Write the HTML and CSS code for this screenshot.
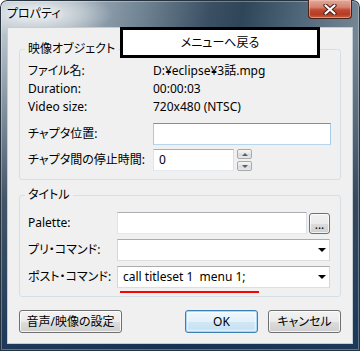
FILE: index.html
```html
<!DOCTYPE html>
<html lang="ja">
<head>
<meta charset="utf-8">
<title>プロパティ</title>
<link rel="stylesheet" href="styles.css">
</head>
<body>
<div class="window">
  <div class="titlebar">
    <span class="caption">プロパティ</span>
    <div class="close-btn">
      <svg width="14" height="11" viewBox="0 0 14 11"><path d="M2.5 1.5 L11.5 9.5 M11.5 1.5 L2.5 9.5" stroke="#4a1f16" stroke-width="4.2" stroke-linecap="round"/><path d="M2.5 1.5 L11.5 9.5 M11.5 1.5 L2.5 9.5" stroke="#fff" stroke-width="2.2" stroke-linecap="round"/></svg>
    </div>
  </div>
  <div class="client">
    <fieldset class="group group-video">
      <legend>映像オブジェクト</legend>
      <div class="info-row"><span class="label">ファイル名:</span><span class="value">D:¥eclipse¥3話.mpg</span></div>
      <div class="info-row"><span class="label">Duration:</span><span class="value">00:00:03</span></div>
      <div class="info-row"><span class="label">Video size:</span><span class="value">720x480 (NTSC)</span></div>
      <div class="field-row first-field"><span class="label">チャプタ位置:</span><div class="textbox textbox-focus chapter-box"></div></div>
      <div class="field-row second-field"><span class="label">チャプタ間の停止時間:</span><div class="textbox pause-box">0</div>
        <div class="spin"><div class="spin-btn"><span class="arrow-up"></span></div><div class="spin-btn"><span class="arrow-down"></span></div></div>
      </div>
    </fieldset>
    <fieldset class="group group-title">
      <legend>タイトル</legend>
      <div class="field-row"><span class="label label-narrow">Palette:</span><div class="textbox palette-box"></div><div class="btn small-btn">...</div></div>
      <div class="field-row spaced"><span class="label label-narrow">プリ・コマンド:</span><div class="combo"><span class="combo-arrow"></span></div></div>
      <div class="field-row spaced"><span class="label label-narrow">ポスト・コマンド:</span><div class="combo"><span class="combo-text">call titleset 1  menu 1;</span><span class="combo-arrow"></span><span class="underline"></span></div></div>
    </fieldset>
    <div class="button-row">
      <div class="btn av-btn">音声/映像の設定</div>
      <div class="btn default-btn ok-btn">OK</div>
      <div class="btn cancel-btn">キャンセル</div>
    </div>
  </div>
  <div class="overlay-note">メニューへ戻る</div>
</div>
</body>
</html>
```
FILE: styles.css
```css
* { box-sizing: border-box; }
html, body { margin: 0; padding: 0; }
body {
  width: 360px;
  height: 351px;
  overflow: hidden;
  font-family: "Noto Sans", "Noto Sans CJK JP", sans-serif;
  font-size: 12px;
  line-height: 16px;
  color: #000;
  font-feature-settings: "palt";
  background: #fff;
}
.window {
  position: relative;
  width: 360px;
  height: 351px;
  border-radius: 7px 7px 0 0;
  display: flex;
  flex-direction: column;
  box-shadow: inset 0 0 0 1px #26323d, inset 0 0 0 2px rgba(255,255,255,.3);
  background:
    radial-gradient(ellipse 75px 24px at 38px 14px, rgba(255,255,255,.8), rgba(255,255,255,0)),
    linear-gradient(to bottom, rgba(25,45,70,0) 0, rgba(25,45,70,0) 40px, rgba(22,42,66,.7) 200px, rgba(20,50,84,.95) 351px),
    linear-gradient(100deg, #b8c3cb 0%, #a3b1bc 18%, #6d8191 35%, #3b5063 50%, #2f4558 58%, #51677a 72%, #7a8b98 88%, #8a9aa6 100%);
}
.titlebar {
  height: 28px;
  flex: none;
  display: flex;
  align-items: flex-start;
  padding-left: 7px;
}
.caption {
  line-height: 28px;
  font-size: 12px;
  color: #000;
  text-shadow: 0 0 6px rgba(255,255,255,.9), 0 0 10px rgba(255,255,255,.8);
}
.close-btn {
  margin-left: auto;
  margin-right: 8px;
  width: 44px;
  height: 19px;
  border: 1px solid #4a2219;
  border-top: none;
  border-radius: 0 0 4px 4px;
  background: linear-gradient(to bottom, #e2a999 0%, #d5826f 40%, #c04a33 55%, #b63c22 80%, #c8603f 100%);
  box-shadow: inset 0 0 0 1px rgba(255,210,200,.45);
  display: flex;
  align-items: center;
  justify-content: center;
}
.client {
  margin: 0 8px;
  height: 315px;
  background: #f0f0f0;
  padding: 13px 11px 0;
  display: flex;
  flex-direction: column;
  box-shadow: 0 0 0 1px #c4ccd4;
}
.group {
  margin: 0;
  border: 1px solid #d5dfe5;
  border-radius: 3px;
  min-width: 0;
}
.group legend {
  padding: 0 3px;
  margin-left: -3px;
  line-height: 16px;
}
.group-video { padding: 5px 9px 8px 8px; }
.group-title { padding: 9px 9px 8px 8px; margin-top: 7px; }
.info-row {
  display: flex;
  height: 18px;
  line-height: 18px;
}
.label { width: 125px; flex: none; }
.label-narrow { width: 89px; }
.field-row {
  display: flex;
  align-items: center;
  height: 22px;
}
.first-field { margin-top: 7px; }
.second-field { margin-top: 4px; }
.spaced { margin-top: 5px; }
.textbox {
  height: 22px;
  border: 1px solid;
  border-color: #abadb3 #dbdfe6 #e3e9ef #e2e3ea;
  background: #fff;
  padding: 0 5px;
  line-height: 20px;
}
.textbox-focus { border-color: #5f98c8 #a9cbe8 #b7d6ee #a9cbe8; }
.chapter-box { width: 178px; }
.pause-box { width: 81px; }
.spin {
  margin-left: 3px;
  width: 15px;
  height: 22px;
  display: flex;
  flex-direction: column;
  justify-content: space-between;
}
.spin-btn {
  height: 10px;
  border: 1px solid #a9a9a9;
  border-radius: 2px;
  background: linear-gradient(to bottom, #f6f6f6, #e4e4e4 50%, #d9d9d9 51%, #e8e8e8);
  display: flex;
  align-items: center;
  justify-content: center;
}
.arrow-up {
  width: 0; height: 0;
  border-left: 3px solid transparent;
  border-right: 3px solid transparent;
  border-bottom: 3px solid #4d6185;
}
.arrow-down {
  width: 0; height: 0;
  border-left: 3px solid transparent;
  border-right: 3px solid transparent;
  border-top: 3px solid #4d6185;
}
.palette-box { width: 190px; }
.combo {
  position: relative;
  width: 213px;
  height: 22px;
  border: 1px solid;
  border-color: #acacac #d6d6d6 #dedede #d6d6d6;
  background: #fff;
  padding-left: 5px;
  display: flex;
  align-items: center;
}
.combo-text { white-space: pre; }
.combo-arrow {
  margin-left: auto;
  margin-right: 3px;
  width: 0; height: 0;
  border-left: 4px solid transparent;
  border-right: 4px solid transparent;
  border-top: 4px solid #000;
}
.underline {
  position: absolute;
  left: 2px;
  top: 24px;
  width: 139px;
  height: 2px;
  background: #f00;
}
.btn {
  height: 23px;
  border: 1px solid #707070;
  border-radius: 3px;
  background: linear-gradient(to bottom, #f2f2f2 0%, #ebebeb 50%, #dddddd 51%, #cfcfcf 100%);
  box-shadow: inset 0 0 0 1px rgba(255,255,255,.75);
  display: flex;
  align-items: center;
  justify-content: center;
  flex: none;
}
.small-btn {
  margin-left: 2px;
  width: 21px;
  height: 21px;
  line-height: 12px;
  padding-top: 4px;
  letter-spacing: 0;
}
.button-row {
  display: flex;
  margin-top: 13px;
}
.av-btn { width: 103px; }
.ok-btn { margin-left: auto; width: 73px; }
.cancel-btn { margin-left: 10px; width: 73px; }
.default-btn {
  border-color: #3c7fb1;
  background: linear-gradient(to bottom, #eef7fc 0%, #e3f1fa 50%, #d1e8f6 51%, #c3e0f2 100%);
  box-shadow: inset 0 0 0 1px #a8d8f5, inset 0 0 2px 2px rgba(255,255,255,.6);
}
.overlay-note {
  position: absolute;
  left: 120px;
  top: 27px;
  width: 200px;
  height: 31px;
  border: 3px solid #000;
  background: #fff;
  display: flex;
  align-items: center;
  justify-content: center;
}
```
